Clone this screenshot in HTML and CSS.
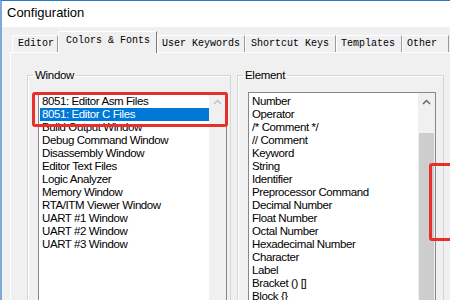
FILE: index.html
```html
<!DOCTYPE html>
<html lang="en">
<head>
    <meta charset="UTF-8">
    <title>Configuration</title>
    <link rel="stylesheet" href="styles.css">
</head>
<body>

<div class="window">
    <div class="titlebar">Configuration</div>

    <div class="dialog">
        <div class="tabs">
            <div class="tab tab-editor">Editor</div>
            <div class="tab tab-colors active">Colors &amp; Fonts</div>
            <div class="tab tab-keywords">User Keywords</div>
            <div class="tab tab-shortcuts">Shortcut Keys</div>
            <div class="tab tab-templates">Templates</div>
            <div class="tab tab-other">Other</div>
        </div>

        <div class="panel">
            <fieldset class="group group-window">
                <legend>Window</legend>
                <div class="listbox">
                    <ul class="items">
                        <li>8051: Editor Asm Files</li>
                        <li class="selected">8051: Editor C Files</li>
                        <li>Build Output Window</li>
                        <li>Debug Command Window</li>
                        <li>Disassembly Window</li>
                        <li>Editor Text Files</li>
                        <li>Logic Analyzer</li>
                        <li>Memory Window</li>
                        <li>RTA/ITM Viewer Window</li>
                        <li>UART #1 Window</li>
                        <li>UART #2 Window</li>
                        <li>UART #3 Window</li>
                    </ul>
                    <div class="scrollbar disabled">
                        <div class="arrow">
                            <svg width="9" height="6" viewBox="0 0 9 6"><polyline points="1,5 4.5,1.5 8,5" fill="none" stroke="currentColor" stroke-width="1.4"/></svg>
                        </div>
                    </div>
                </div>
            </fieldset>

            <fieldset class="group group-element">
                <legend>Element</legend>
                <div class="listbox">
                    <ul class="items">
                        <li>Number</li>
                        <li>Operator</li>
                        <li>/* Comment */</li>
                        <li>// Comment</li>
                        <li>Keyword</li>
                        <li>String</li>
                        <li>Identifier</li>
                        <li>Preprocessor Command</li>
                        <li>Decimal Number</li>
                        <li>Float Number</li>
                        <li>Octal Number</li>
                        <li>Hexadecimal Number</li>
                        <li>Character</li>
                        <li>Label</li>
                        <li>Bracket () []</li>
                        <li>Block {}</li>
                    </ul>
                    <div class="scrollbar">
                        <div class="arrow">
                            <svg width="9" height="6" viewBox="0 0 9 6"><polyline points="1,5 4.5,1.5 8,5" fill="none" stroke="currentColor" stroke-width="1.4"/></svg>
                        </div>
                        <div class="track"></div>
                        <div class="thumb"></div>
                    </div>
                </div>
            </fieldset>
        </div>
    </div>

    <!-- red annotation boxes -->
    <div class="mark mark-window"></div>
    <div class="mark mark-right"></div>
</div>

</body>
</html>
```

FILE: styles.css
```css
body {
    margin: 0;
    background-color: #f0f0f0;
    font-family: "Liberation Sans", Arial, sans-serif;
    color: #000;
}

.window {
    position: relative;
    width: 450px;
    height: 300px;
    overflow: hidden;
    box-sizing: border-box;
    border-top: 1px solid #2b78c8;
    border-left: 2px solid #7fa9d8;
}

.titlebar {
    height: 26px;
    background-color: white;
    padding-left: 5px;
    font-size: 13px;
    line-height: 24px;
}

.dialog {
    padding-left: 8px;
}

/* tab strip */
.tabs {
    display: flex;
    align-items: flex-end;
    height: 25px;
    padding-left: 2px;
    font-family: "Liberation Mono", "Courier New", monospace;
    font-size: 10px;
}

.tab {
    box-sizing: border-box;
    height: 17px;
    padding-left: 4px;
    line-height: 15px;
    border-top: 1px solid white;
    border-left: 1px solid white;
    border-right: 1px solid #9a9a9a;
    white-space: nowrap;
}

.tab.active {
    position: relative;
    z-index: 1;
    height: 22px;
    margin-bottom: -1px;
    line-height: 18px;
    background-color: #f0f0f0;
    border-right-color: #7a7a7a;
}

.tab-editor { width: 46px; padding-left: 5px; }
.tab-colors { width: 99px; padding-left: 7px; }
.tab-keywords { width: 88px; }
.tab-shortcuts { width: 91px; padding-left: 5px; }
.tab-templates { width: 66px; }
.tab-other { width: 47px; }

/* tab page */
.panel {
    display: flex;
    align-items: flex-start;
    height: 260px;
    padding-left: 16px;
    border-top: 1px solid white;
    border-left: 1px solid white;
}

.group {
    box-sizing: border-box;
    margin: 16px 0 0 0;
    padding: 0 3px 0 10px;
    border: 1px solid #d5d5d5;
    box-shadow: inset 1px 1px 0 white;
}

.group-window {
    width: 204px;
    margin-right: 6px;
}

.group-element {
    width: 207px;
}

.group legend {
    margin-left: -5px;
    padding: 0 2px;
    font-size: 11.5px;
    line-height: 13px;
    letter-spacing: -0.3px;
}

.listbox {
    display: flex;
    width: 189px;
    height: 230px;
    margin-top: 10px;
    box-sizing: border-box;
    border: 1px solid #828790;
    background-color: white;
}

.group-element .listbox {
    width: 188px;
}

.items {
    flex: 1;
    list-style: none;
    margin: 0;
    padding: 2px 0 0 1px;
    font-size: 11.5px;
    letter-spacing: -0.4px;
}

.items li {
    height: 13px;
    line-height: 13px;
    padding-left: 2px;
    white-space: nowrap;
}

.items li.selected {
    background-color: #0078d7;
    color: white;
}

.scrollbar {
    display: flex;
    flex-direction: column;
    width: 17px;
    background-color: #f0f0f0;
    color: #606060;
}

.scrollbar.disabled {
    color: #bfbfbf;
}

.arrow {
    height: 17px;
    display: flex;
    align-items: center;
    justify-content: center;
}

.track {
    height: 23px;
}

.thumb {
    flex: 1;
    margin: 0 1px;
    background-color: #cdcdcd;
}

/* annotations */
.mark {
    position: absolute;
    box-sizing: border-box;
    border: 3px solid #e8302a;
    border-radius: 3px;
}

.mark-window {
    left: 30px;
    top: 91px;
    width: 196px;
    height: 35px;
}

.mark-right {
    left: 427px;
    top: 162px;
    width: 40px;
    height: 78px;
}
```
